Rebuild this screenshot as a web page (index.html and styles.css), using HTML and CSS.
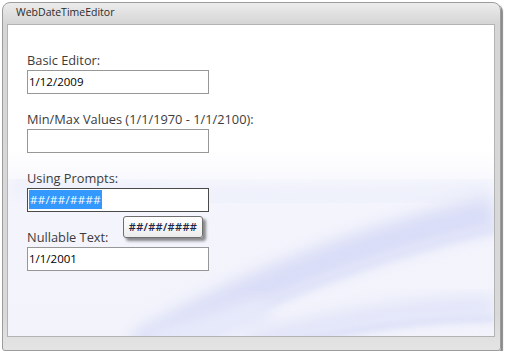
FILE: index.html
```html
<!DOCTYPE html>
<html lang="en">
<head>
  <meta charset="UTF-8">
  <title>WebDateTimeEditor</title>
  <link rel="stylesheet" href="styles.css">
</head>
<body>
  <div class="window">
    <div class="title-bar">WebDateTimeEditor</div>
    <div class="panel">
      <!-- fundo com as faixas lilás -->
      <svg class="swoosh" width="486" height="311" viewBox="0 0 486 311">
        <defs>
          <linearGradient id="haze" x1="0" y1="0" x2="0" y2="1">
            <stop offset="0" stop-color="#ffffff"/>
            <stop offset="0.40" stop-color="#ffffff"/>
            <stop offset="0.58" stop-color="#f3f4fc"/>
            <stop offset="1" stop-color="#f2f3fb"/>
          </linearGradient>
          <filter id="soft" x="-20%" y="-50%" width="140%" height="200%">
            <feGaussianBlur stdDeviation="8"/>
          </filter>
          <filter id="softer" x="-20%" y="-50%" width="140%" height="200%">
            <feGaussianBlur stdDeviation="3"/>
          </filter>
        </defs>
        <rect width="486" height="311" fill="url(#haze)"/>
        <path d="M0 160 Q 250 180 486 165" stroke="#eef0fb" stroke-width="24" fill="none" filter="url(#soft)"/>
        <path d="M130 325 Q 300 228 486 188" stroke="#d9ddf7" stroke-width="34" fill="none" filter="url(#soft)"/>
        <path d="M175 320 Q 320 242 486 203" stroke="#e0e3f9" stroke-width="7" fill="none" filter="url(#softer)"/>
        <path d="M240 318 Q 380 282 486 282" stroke="#e2e5f9" stroke-width="22" fill="none" filter="url(#soft)"/>
        <path d="M260 322 Q 400 292 486 294" stroke="#dadef7" stroke-width="5" fill="none" filter="url(#softer)"/>
        <path d="M140 320 Q 200 302 260 284" stroke="#e6e9fa" stroke-width="30" fill="none" filter="url(#soft)"/>
      </svg>

      <div class="form">
        <div class="group">
          <div class="label">Basic Editor:</div>
          <div class="field">1/12/2009</div>
        </div>
        <div class="group">
          <div class="label">Min/Max Values (1/1/1970 - 1/1/2100):</div>
          <div class="field"></div>
        </div>
        <div class="group prompt-group">
          <div class="label">Using Prompts:</div>
          <div class="field focused"><span class="selected">##/##/####</span></div>
          <div class="tooltip">##/##/####</div>
        </div>
        <div class="group">
          <div class="label">Nullable Text:</div>
          <div class="field">1/1/2001</div>
        </div>
      </div>
    </div>
  </div>
</body>
</html>
```

FILE: styles.css
```css
body {
  margin: 0;
  background: #ffffff;
  font-family: 'Open Sans', 'Noto Sans', sans-serif;
}
/* Moldura da janela */
.window {
  box-sizing: border-box;
  margin: 2px 0 0 2px;
  width: 499px;
  height: 349px;
  padding: 0 5px 13px 4px;
  border: 1px solid #9c9c9c;
  border-radius: 8px 8px 3px 3px;
  background: linear-gradient(to bottom, #ececec, #d6d6d6 20px, #d9d9d9 90%, #e4e4e4);
  box-shadow: 2px 2px 1px #8a8a8a;
}
.title-bar {
  height: 21px;
  padding-left: 9px;
  font-size: 10.5px;
  line-height: 19px;
  color: #2b2b2b;
}
/* Área de conteúdo */
.panel {
  position: relative;
  box-sizing: border-box;
  height: 313px;
  border: 1px solid #b3b3b3;
  background: #ffffff;
  overflow: hidden;
}
.swoosh {
  position: absolute;
  left: 0;
  top: 0;
}
.form {
  position: relative;
  padding: 27px 0 0 19px;
  display: flex;
  flex-direction: column;
  gap: 17px;
}
.group {
  display: flex;
  flex-direction: column;
  gap: 2px;
}
.label {
  font-size: 12.8px;
  line-height: 16px;
  color: #3c3c3c;
}
.field {
  box-sizing: border-box;
  width: 182px;
  height: 24px;
  padding: 0 1px;
  border: 1px solid #979797;
  background: #ffffff;
  font-size: 11.5px;
  line-height: 22px;
  color: #000000;
}
.field.focused {
  border-color: #4a4a4a;
}
.selected {
  display: inline-block;
  line-height: 19px;
  padding: 0 1px;
  background: #3399ff;
  color: #ffffff;
  letter-spacing: 0.3px;
}
.prompt-group {
  position: relative;
}
/* Dica com a máscara */
.tooltip {
  position: absolute;
  left: 96px;
  top: 46px;
  box-sizing: border-box;
  width: 80px;
  height: 22px;
  border: 1px solid #6e6e6e;
  border-radius: 3px;
  background: linear-gradient(to bottom, #ffffff, #ececec);
  box-shadow: 3px 3px 3px rgba(0, 0, 0, 0.45);
  font-size: 11px;
  font-weight: 600;
  line-height: 20px;
  text-align: center;
  color: #1c2647;
  letter-spacing: 0.3px;
}
```
